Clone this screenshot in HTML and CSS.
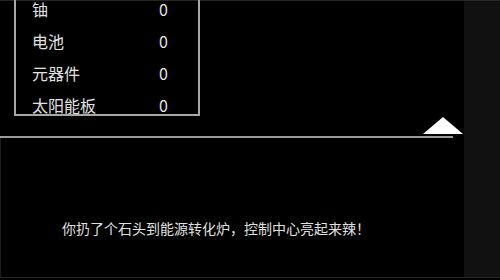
FILE: index.html
```html
<!DOCTYPE html>
<html lang="zh">
<head>
<meta charset="utf-8">
<link rel="stylesheet" href="styles.css">
</head>
<body>
<div class="screen">
  <main class="main">
    <section class="top">
      <div class="inventory">
        <div class="row"><span class="name">铀</span><span class="qty">0</span></div>
        <div class="row"><span class="name">电池</span><span class="qty">0</span></div>
        <div class="row"><span class="name">元器件</span><span class="qty">0</span></div>
        <div class="row"><span class="name">太阳能板</span><span class="qty">0</span></div>
      </div>
    </section>
    <div class="divider">
      <div class="rule"></div>
      <svg class="toggle" width="40" height="17" viewBox="0 0 40 17"><polygon points="20,0 40,17 0,17" fill="#ffffff"/></svg>
    </div>
    <section class="log">
      <p class="message">你扔了个石头到能源转化炉，控制中心亮起来辣！</p>
    </section>
  </main>
  <aside class="side"></aside>
</div>
</body>
</html>
```

FILE: styles.css
```css
html, body {
  margin: 0;
  padding: 0;
  background: #000;
}
body {
  width: 500px;
  height: 280px;
  overflow: hidden;
  font-family: "Noto Sans CJK SC", "Noto Sans", sans-serif;
  color: #e2e2e2;
}
.screen {
  display: grid;
  grid-template-columns: 464px 36px;
  height: 278px;
  border-top: 1px solid #262626;
  border-bottom: 1px solid #262626;
  box-sizing: border-box;
}
.main {
  display: flex;
  flex-direction: column;
  background: #000;
}
.side {
  background: #111;
}
.top {
  height: 135px;
  padding-left: 14px;
}
.inventory {
  width: 186px;
  box-sizing: border-box;
  margin-top: -1px;
  border: 2px solid #a8a8a8;
  border-top: none;
  padding: 0 30px 0 16px;
  display: flex;
  flex-direction: column;
  gap: 14px;
}
.row {
  display: flex;
  justify-content: space-between;
  font-size: 16px;
  line-height: 18px;
}
.divider {
  position: relative;
  height: 2px;
}
.rule {
  width: 453px;
  height: 2px;
  background: #9a9a9a;
}
.toggle {
  position: absolute;
  left: 423px;
  top: -19px;
  display: block;
}
.log {
  flex: 1;
  border-left: 1px solid #1c1c1c;
  padding: 80px 0 0 61px;
}
.message {
  margin: 0;
  font-size: 14px;
  line-height: 20px;
  color: #e0e0e0;
}
```
